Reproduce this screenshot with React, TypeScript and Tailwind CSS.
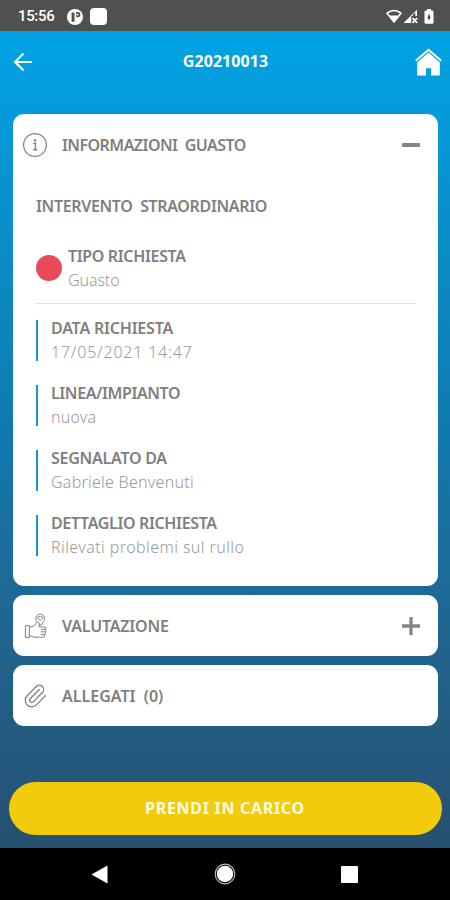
import type { ReactNode } from "react";

const label = "whitespace-nowrap text-[16px] leading-[24px] font-semibold text-[#7f7f7f]";
const value = "whitespace-nowrap text-[16px] leading-[24px] font-light text-[#999999]";

function StatusBar() {
  return (
    <div className="flex h-[31px] shrink-0 items-center bg-[#505050] pl-[18px] pr-[15px] pt-[2px] text-white">
      <span className="w-[49px] font-['Roboto',sans-serif] text-[15px] font-medium leading-none tracking-[-0.35px]">15:56</span>
      <svg className="h-4 w-4" viewBox="0 0 16 16">
        <circle cx="8" cy="8" r="8" fill="#fff" />
        <path d="M4.6 12.7V3.5h2.9v9.2zM9.2 3h1.6a2.6 2.6 0 0 1 0 5.2H9.2z" fill="#505050" />
        <circle cx="10.6" cy="5.6" r="0.9" fill="#fff" />
      </svg>
      <div className="ml-[7px] h-[17px] w-[17px] rounded-[4px] bg-white" />
      <div className="ml-auto flex items-center">
        <svg className="h-[15px] w-4" viewBox="0 0 16 15">
          <path d="M1 4.2Q8-1.2 15 4.2L8 13Z" fill="none" stroke="#fff" strokeWidth="1.6" strokeLinejoin="round" />
          <path d="M3.4 6.4H12.6L8 13Z" fill="#fff" />
        </svg>
        <svg className="ml-[1px] h-[15px] w-[15px]" viewBox="0 0 15 15">
          <path d="M0.5 14L14 0.8V7H8.2V14Z" fill="#fff" />
          <path d="M9.8 7V6L12.3 3.6V7Z" fill="#505050" />
          <path d="M9.5 9l4.6 4.8M14.1 9L9.5 13.8" stroke="#fff" strokeWidth="1.7" />
        </svg>
        <svg className="ml-[6px] mr-[1px] h-[15px] w-[10px]" viewBox="0 0 10 15">
          <path d="M3 0h4v1.6h1.2q1.3 0 1.3 1.3v10.6q0 1.3-1.3 1.3H1.8q-1.3 0-1.3-1.3V2.9q0-1.3 1.3-1.3H3z" fill="#fff" />
          <path d="M5 4.8L3.5 8.2L5 11.8L6.5 8.2Z" fill="#505050" />
        </svg>
      </div>
    </div>
  );
}

function Header() {
  return (
    <header className="flex h-[63px] items-center justify-between pl-[13px] pr-[8px] text-white">
      <svg className="mb-[2px] h-[18px] w-[27px]" viewBox="0 0 27 18" fill="none" stroke="#fff" strokeWidth="2.1" strokeLinecap="round">
        <path d="M18 9H2.2M9.8 1.2L2 9L9.8 16.8" />
      </svg>
      <h1 className="mb-[3px] mr-[4px] text-[16px] font-bold leading-[24px] tracking-[0.05px]">G20210013</h1>
      <svg className="mb-[1px] h-[28px] w-[27px]" viewBox="0 0 27 28">
        <path d="M0.8 12.8L13.5 1.8L26.2 12.8" fill="none" stroke="#fff" strokeWidth="2.1" />
        <path d="M13.5 4.6L24.8 14.5V27.6H16V20.2H11V27.6H2.2V14.5Z" fill="#fff" />
      </svg>
    </header>
  );
}

function InfoIcon() {
  return (
    <svg className="h-[26px] w-[26px]" viewBox="0 0 26 26" fill="none" stroke="#808080" strokeWidth="1.2">
      <circle cx="13" cy="13" r="11.4" />
      <path d="M11.3 11.2H13.4V17.6M11.2 17.7H15.2" strokeWidth="1.4" />
      <circle cx="13" cy="8.2" r="1.2" fill="#808080" stroke="none" />
    </svg>
  );
}

function RatingIcon() {
  return (
    <svg className="h-[26px] w-[26px]" viewBox="0 0 26 26" fill="none" stroke="#808080" strokeWidth="1" strokeLinejoin="round">
      <path d="M3.4 12.7H7.3V24.6H3.4ZM7.3 14.2L11.4 13.2L14.2 10.5V9.8Q15.6 8.6 17.2 10V14H22.4Q24.6 14.2 23.6 16.2Q24.6 17.3 23.3 18.8Q24 20.2 22.7 21.4Q23.2 24 20.6 24.2H12L9.2 23H7.3M19.2 16.3H23.6M19 18.8H23.3M18.8 21.4H22.7" />
      <path d="M15.2 8.8A4.4 4.4 0 1 1 21.3 8.6L19.4 12H17.2" />
      <path d="M18.2 7.7L15.9 5.3Q15.7 3.2 17.3 3.4L18.2 4.3L19.1 3.4Q20.7 3.2 20.5 5.3Z" />
    </svg>
  );
}

function ClipIcon() {
  return (
    <svg className="h-[26px] w-[26px]" viewBox="0 0 24 24" fill="none" stroke="#808080" strokeWidth="1.2" strokeLinecap="round" strokeLinejoin="round">
      <path d="m16 6-8.414 8.586a2 2 0 0 0 2.829 2.829l8.414-8.586a4 4 0 1 0-5.657-5.657l-8.379 8.551a6 6 0 1 0 8.485 8.485l8.379-8.551" />
    </svg>
  );
}

function CardHeader({ icon, title, tracking, children }: { icon: ReactNode; title: string; tracking: string; children?: ReactNode }) {
  return (
    <div className="flex h-[61px] items-center pl-[9px] pr-[18px]">
      {icon}
      <h2 className={`ml-[14px] mr-auto whitespace-pre ${label} ${tracking}`}>{title}</h2>
      {children}
    </div>
  );
}

function Detail({ name, text, nameTracking, textTracking }: { name: string; text: string; nameTracking: string; textTracking: string }) {
  return (
    <div className="flex h-[41px] items-center border-l-2 border-[#1595d1] pl-[13px]">
      <dl className="mb-[2px]">
        <dt className={`${label} ${nameTracking}`}>{name}</dt>
        <dd className={`${value} ${textTracking}`}>{text}</dd>
      </dl>
    </div>
  );
}

export default function App() {
  return (
    <div className="flex h-[900px] w-[450px] flex-col overflow-hidden font-['Noto_Sans',sans-serif]">
      <StatusBar />
      <div className="flex h-[817px] flex-col bg-linear-to-b from-[#00a3e4] via-[#0f79ae] to-[#265070]">
        <Header />
        <main className="mt-[20px] flex flex-col gap-[9px] pl-[13px] pr-[12px]">
          <section className="h-[472px] rounded-[11px] bg-white">
            <CardHeader icon={<InfoIcon />} title="INFORMAZIONI  GUASTO" tracking="tracking-[-0.55px]">
              <div className="h-[4px] w-[18px] rounded-[1px] bg-[#858585]" />
            </CardHeader>
            <div className="pl-[23px] pr-[22px]">
              <h3 className={`mt-[19px] whitespace-pre ${label} tracking-[-0.35px]`}>INTERVENTO  STRAORDINARIO</h3>
              <div className="mt-[26px] flex items-center border-b border-[#dedede] pb-[11px]">
                <div className="h-[26px] w-[26px] rounded-full bg-[#e84a59]" />
                <dl className="ml-[6px]">
                  <dt className={`${label} tracking-[-0.35px]`}>TIPO RICHIESTA</dt>
                  <dd className={`${value} tracking-[-0.1px]`}>Guasto</dd>
                </dl>
              </div>
              <div className="mt-[16px] flex flex-col gap-[24px]">
                <Detail name="DATA RICHIESTA" text="17/05/2021 14:47" nameTracking="tracking-[-0.2px]" textTracking="tracking-[0.8px]" />
                <Detail name="LINEA/IMPIANTO" text="nuova" nameTracking="tracking-[-0.4px]" textTracking="tracking-[0.2px]" />
                <Detail name="SEGNALATO DA" text="Gabriele Benvenuti" nameTracking="tracking-[-0.25px]" textTracking="tracking-[0.25px]" />
                <Detail name="DETTAGLIO RICHIESTA" text="Rilevati problemi sul rullo" nameTracking="tracking-[-0.35px]" textTracking="tracking-[0.42px]" />
              </div>
            </div>
          </section>
          <section className="rounded-[11px] bg-white">
            <CardHeader icon={<RatingIcon />} title="VALUTAZIONE" tracking="tracking-[-0.2px]">
              <svg className="h-[18px] w-[18px]" viewBox="0 0 18 18" stroke="#858585" strokeWidth="3.3">
                <path d="M0 9H18M9 0V18" />
              </svg>
            </CardHeader>
          </section>
          <section className="rounded-[11px] bg-white">
            <CardHeader icon={<ClipIcon />} title="ALLEGATI  (0)" tracking="tracking-[0px]" />
          </section>
        </main>
        <button className="mx-auto mt-[56px] h-[53px] w-[433px] rounded-full bg-[#f2cb0b] pb-[1px] text-[16px] font-bold tracking-[0.7px] text-[#fffbe5]">
          PRENDI IN CARICO
        </button>
      </div>
      <nav className="flex h-[52px] items-center bg-black pl-[91px]">
        <svg className="h-[19px] w-[17px]" viewBox="0 0 17 19"><path d="M0.5 9.5L16.5 0.5V18.5Z" fill="#fff" /></svg>
        <svg className="ml-[106px] h-[22px] w-[22px]" viewBox="0 0 22 22">
          <circle cx="11" cy="11" r="9.8" fill="none" stroke="#bbb" strokeWidth="1.2" />
          <circle cx="11" cy="11" r="8.2" fill="#fff" />
        </svg>
        <div className="ml-[105px] h-[17px] w-[17px] rounded-[1px] bg-white" />
      </nav>
    </div>
  );
}
